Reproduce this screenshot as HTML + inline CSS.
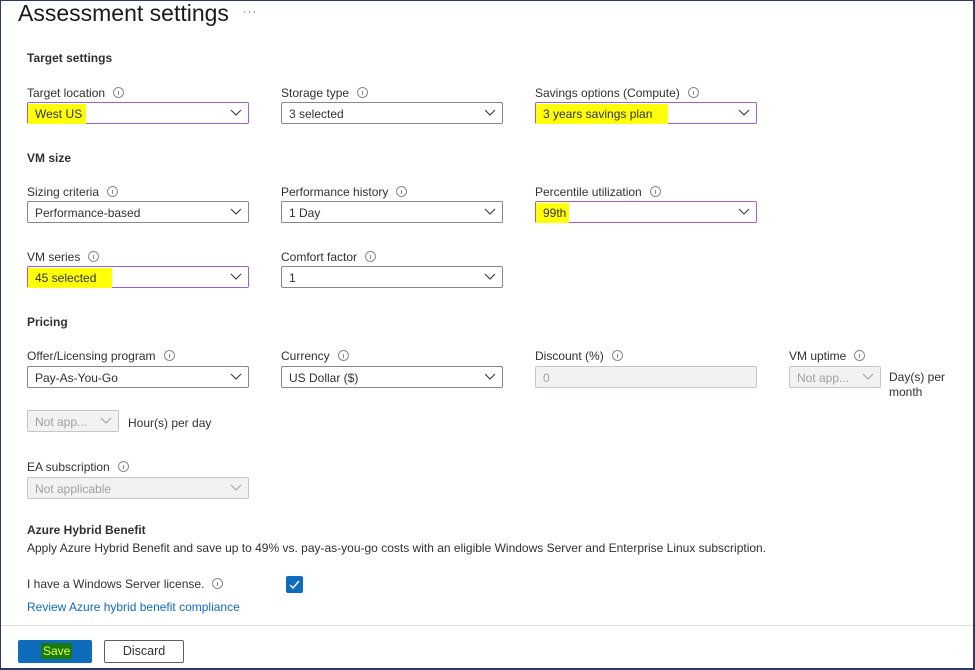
<!DOCTYPE html>
<html><head><style>
*{box-sizing:border-box;margin:0;padding:0}
body{width:975px;height:670px;background:#fff;font-family:"Liberation Sans",sans-serif;color:#323130;position:relative;overflow:hidden;font-size:12px}
.frame{position:absolute;left:0;top:0;width:975px;height:670px;border:1px solid #2b3a67;border-right-width:2px;border-bottom-width:2px}
.a{position:absolute;white-space:nowrap}
h1{position:absolute;left:18px;top:0;font-size:23px;font-weight:normal;color:#1b1a19}
.dots{position:absolute;left:243px;top:6px;color:#605e5c;font-size:11px;letter-spacing:1px}
.h{font-weight:bold;font-size:12px;color:#323130}
.i{display:inline-block;width:11px;height:11px;border:1px solid #8a8886;border-radius:50%;margin-left:8px;vertical-align:-1px;position:relative}
.i:after{content:"";position:absolute;left:4px;top:3px;width:1px;height:4px;background:#8a8886}
.dd{position:absolute;height:22px;border:1px solid #8a8886;border-radius:2px;padding:4px 7px 0;font-size:12px}
.dd svg{position:absolute;right:6px;top:6px}
.pur{border-color:#a25fc6}
.dis{background:#f3f2f1;border-color:#c8c6c4;color:#a19f9d}
.hl{background:#ffff0a;margin-left:-7px;padding:3px 8px 3px 7px}
</style></head><body>
<div class="frame"></div>
<h1>Assessment settings</h1><div class="dots">···</div>
<div class="a h" style="left:27px;top:51px">Target settings</div>

<div class="a" style="left:27px;top:86px">Target location<span class="i"></span></div>
<div class="dd pur" style="left:27px;top:102px;width:222px"><span class="hl" style="padding-right:4px">West US</span><svg width="12" height="8"><path d="M1 1l5 5 5-5" fill="none" stroke="#323130"/></svg></div>
<div class="a" style="left:281px;top:86px">Storage type<span class="i"></span></div>
<div class="dd" style="left:281px;top:102px;width:222px">3 selected<svg width="12" height="8"><path d="M1 1l5 5 5-5" fill="none" stroke="#323130"/></svg></div>
<div class="a" style="left:535px;top:86px">Savings options (Compute)<span class="i"></span></div>
<div class="dd pur" style="left:535px;top:102px;width:222px"><span class="hl" style="padding-right:16px">3 years savings plan</span><svg width="12" height="8"><path d="M1 1l5 5 5-5" fill="none" stroke="#323130"/></svg></div>

<div class="a h" style="left:27px;top:151px">VM size</div>
<div class="a" style="left:27px;top:185px">Sizing criteria<span class="i"></span></div>
<div class="dd" style="left:27px;top:201px;width:222px">Performance-based<svg width="12" height="8"><path d="M1 1l5 5 5-5" fill="none" stroke="#323130"/></svg></div>
<div class="a" style="left:281px;top:185px">Performance history<span class="i"></span></div>
<div class="dd" style="left:281px;top:201px;width:222px">1 Day<svg width="12" height="8"><path d="M1 1l5 5 5-5" fill="none" stroke="#323130"/></svg></div>
<div class="a" style="left:535px;top:185px">Percentile utilization<span class="i"></span></div>
<div class="dd pur" style="left:535px;top:201px;width:222px"><span class="hl" style="padding-right:3px">99th</span><svg width="12" height="8"><path d="M1 1l5 5 5-5" fill="none" stroke="#323130"/></svg></div>

<div class="a" style="left:27px;top:250px">VM series<span class="i"></span></div>
<div class="dd pur" style="left:27px;top:266px;width:222px"><span class="hl" style="padding-right:16px">45 selected</span><svg width="12" height="8"><path d="M1 1l5 5 5-5" fill="none" stroke="#323130"/></svg></div>
<div class="a" style="left:281px;top:250px">Comfort factor<span class="i"></span></div>
<div class="dd" style="left:281px;top:266px;width:222px">1<svg width="12" height="8"><path d="M1 1l5 5 5-5" fill="none" stroke="#323130"/></svg></div>

<div class="a h" style="left:27px;top:315px">Pricing</div>
<div class="a" style="left:27px;top:349px">Offer/Licensing program<span class="i"></span></div>
<div class="dd" style="left:27px;top:366px;width:222px">Pay-As-You-Go<svg width="12" height="8"><path d="M1 1l5 5 5-5" fill="none" stroke="#323130"/></svg></div>
<div class="a" style="left:281px;top:349px">Currency<span class="i"></span></div>
<div class="dd" style="left:281px;top:366px;width:222px">US Dollar ($)<svg width="12" height="8"><path d="M1 1l5 5 5-5" fill="none" stroke="#323130"/></svg></div>
<div class="a" style="left:535px;top:349px">Discount (%)<span class="i"></span></div>
<div class="dd dis" style="left:535px;top:366px;width:222px">0</div>
<div class="a" style="left:789px;top:349px">VM uptime<span class="i"></span></div>
<div class="dd dis" style="left:789px;top:366px;width:92px">Not app...<svg width="12" height="8"><path d="M1 1l5 5 5-5" fill="none" stroke="#a19f9d"/></svg></div>
<div class="a" style="left:889px;top:370px;line-height:15px">Day(s) per<br>month</div>

<div class="dd dis" style="left:27px;top:410px;width:92px">Not app...<svg width="12" height="8"><path d="M1 1l5 5 5-5" fill="none" stroke="#a19f9d"/></svg></div>
<div class="a" style="left:128px;top:416px">Hour(s) per day</div>

<div class="a" style="left:27px;top:460px">EA subscription<span class="i"></span></div>
<div class="dd dis" style="left:27px;top:477px;width:222px">Not applicable<svg width="12" height="8"><path d="M1 1l5 5 5-5" fill="none" stroke="#a19f9d"/></svg></div>

<div class="a h" style="left:27px;top:523px">Azure Hybrid Benefit</div>
<div class="a" style="left:27px;top:541px">Apply Azure Hybrid Benefit and save up to 49% vs. pay-as-you-go costs with an eligible Windows Server and Enterprise Linux subscription.</div>
<div class="a" style="left:27px;top:577px">I have a Windows Server license.<span class="i"></span></div>
<div class="a" style="left:286px;top:576px;width:17px;height:17px;background:#0f6cbd;border-radius:2px"><svg width="17" height="17"><path d="M4 9l3 3 6-7" fill="none" stroke="#fff" stroke-width="1.4"/></svg></div>
<div class="a" style="left:27px;top:600px;color:#0f6cbd">Review Azure hybrid benefit compliance</div>

<div class="a" style="left:1px;top:625px;width:972px;height:1px;background:#e1dfdd"></div>
<div class="a" style="left:18px;top:640px;width:74px;height:23px;background:#0f6cbd;border-radius:2px"></div>
<div class="a" style="left:41px;top:643px;background:#1a7a12;color:#e8ff40;padding:1px 2px">Save</div>
<div class="a" style="left:104px;top:640px;width:80px;height:23px;border:1px solid #605e5c;border-radius:2px;text-align:center;line-height:21px;font-size:12.5px">Discard</div>
</body></html>
